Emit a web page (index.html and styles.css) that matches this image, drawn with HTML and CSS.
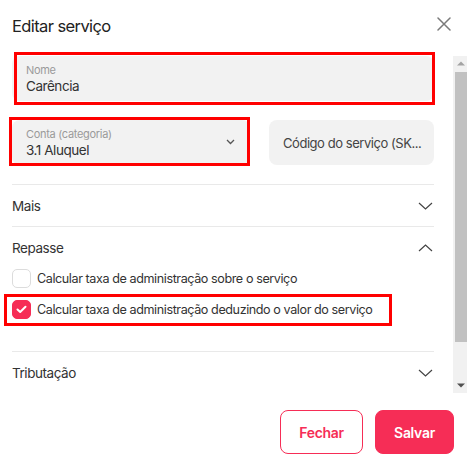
FILE: index.html
```html
<!DOCTYPE html>
<html lang="pt-BR">
<head>
<meta charset="utf-8">
<title>Editar serviço</title>
<link rel="stylesheet" href="styles.css">
</head>
<body>
<div class="modal">
  <header class="modal-header">
    <h2 class="title">Editar serviço</h2>
    <button class="close" aria-label="Fechar">
      <svg width="14" height="14" viewBox="0 0 14 14"><path d="M1 1L13 13M13 1L1 13" stroke="#7a7a7a" stroke-width="1.5" fill="none" stroke-linecap="round"/></svg>
    </button>
  </header>
  <div class="body-wrap">
    <div class="modal-body">
      <div class="field">
        <span class="label">Nome</span>
        <span class="value">Carência</span>
      </div>
      <div class="row2">
        <div class="field select">
          <div class="field-text">
            <span class="label">Conta (categoria)</span>
            <span class="value">3.1 Aluquel</span>
          </div>
          <svg class="select-chev" width="9" height="6" viewBox="0 0 9 6"><path d="M1 1L4.5 4.5L8 1" stroke="#555" stroke-width="1.3" fill="none"/></svg>
        </div>
        <div class="field placeholder">Código do serviço (SK...</div>
      </div>
      <section class="acc">
        <div class="acc-head">
          <span>Mais</span>
          <svg width="15" height="8" viewBox="0 0 15 8"><path d="M1 1L7.5 7L14 1" stroke="#444" stroke-width="1.2" fill="none"/></svg>
        </div>
      </section>
      <section class="acc">
        <div class="acc-head">
          <span>Repasse</span>
          <svg width="15" height="8" viewBox="0 0 15 8"><path d="M1 7L7.5 1L14 7" stroke="#444" stroke-width="1.2" fill="none"/></svg>
        </div>
        <div class="checks">
          <label class="check">
            <span class="box"></span>
            <span>Calcular taxa de administração sobre o serviço</span>
          </label>
          <label class="check">
            <span class="box on">
              <svg width="11" height="9" viewBox="0 0 11 9"><path d="M1.5 4.5L4.2 7L9.5 1.8" stroke="#fff" stroke-width="2" fill="none" stroke-linecap="round" stroke-linejoin="round"/></svg>
            </span>
            <span>Calcular taxa de administração deduzindo o valor do serviço</span>
          </label>
        </div>
      </section>
      <section class="acc">
        <div class="acc-head">
          <span>Tributação</span>
          <svg width="15" height="8" viewBox="0 0 15 8"><path d="M1 1L7.5 7L14 1" stroke="#444" stroke-width="1.2" fill="none"/></svg>
        </div>
      </section>
    </div>
    <div class="scrollbar" aria-hidden="true">
      <div class="sb-btn">
        <svg width="8" height="5" viewBox="0 0 8 5"><path d="M0 4.5L4 0.5L8 4.5Z" fill="#a3a3a3"/></svg>
      </div>
      <div class="sb-track"><div class="sb-thumb"></div></div>
      <div class="sb-btn">
        <svg width="8" height="5" viewBox="0 0 8 5"><path d="M0 0.5L4 4.5L8 0.5Z" fill="#505050"/></svg>
      </div>
    </div>
  </div>
  <footer class="modal-footer">
    <button class="btn btn-outline">Fechar</button>
    <button class="btn btn-primary">Salvar</button>
  </footer>
</div>
<div class="mark mark-nome"></div>
<div class="mark mark-conta"></div>
<div class="mark mark-check"></div>
</body>
</html>
```

FILE: styles.css
```css
* { box-sizing: border-box; }
html, body { margin: 0; padding: 0; }
body {
  font-family: "Inter", "Noto Sans", sans-serif;
  color: #333;
  background: #fff;
  position: relative;
  width: 467px;
  height: 460px;
  overflow: hidden;
}
.modal {
  height: 460px;
  display: flex;
  flex-direction: column;
}
.modal-header {
  height: 56px;
  flex: none;
  display: flex;
  justify-content: space-between;
  align-items: flex-start;
  padding: 16px 16px 0 12px;
}
.title {
  margin: 0;
  font-size: 16.5px;
  line-height: 20px;
  font-weight: 400;
  color: #222;
  letter-spacing: -0.6px;
}
.close {
  border: 0;
  background: none;
  padding: 0;
  margin-top: 1px;
  width: 14px;
  height: 14px;
  display: block;
}
.close svg { display: block; }
.body-wrap {
  flex: 1;
  min-height: 0;
  display: flex;
}
.modal-body {
  flex: 1;
  min-width: 0;
  overflow: hidden;
  padding: 0 19px 44px 12px;
}
.scrollbar {
  width: 14px;
  flex: none;
  background: #f1f1f1;
  display: flex;
  flex-direction: column;
}
.sb-btn {
  height: 15px;
  flex: none;
  display: flex;
  align-items: center;
  justify-content: center;
  padding-left: 1px;
}
.sb-btn svg { display: block; }
.sb-track { flex: 1; padding-top: 1px; }
.sb-thumb {
  height: 270px;
  margin-left: 2px;
  background: #c1c1c1;
}
.field {
  background: #f2f2f2;
  border-radius: 8px;
  height: 45px;
  padding: 7px 14px 0;
  display: flex;
  flex-direction: column;
}
.label {
  font-size: 11px;
  line-height: 14px;
  color: #9a9a9a;
  letter-spacing: -0.3px;
}
.value {
  font-size: 13.5px;
  line-height: 18px;
  color: #333;
  letter-spacing: -0.45px;
}
.row2 {
  margin-top: 19px;
  display: grid;
  grid-template-columns: 238px 1fr;
  gap: 19px;
}
.select {
  flex-direction: row;
  justify-content: space-between;
  align-items: flex-start;
  padding-right: 15px;
}
.field-text { display: flex; flex-direction: column; }
.select-chev { margin-top: 12px; }
.placeholder {
  padding: 0 14px;
  justify-content: center;
  font-size: 13px;
  color: #444;
  white-space: nowrap;
  overflow: hidden;
  letter-spacing: -0.45px;
}
.acc { border-top: 1px solid #e9e9e9; }
.row2 + .acc { margin-top: 19px; }
.acc-head {
  height: 41px;
  display: flex;
  justify-content: space-between;
  align-items: center;
  font-size: 13.5px;
  color: #333;
  letter-spacing: -0.45px;
  padding-right: 1px;
}
.acc-head svg { display: block; }
.checks {
  display: flex;
  flex-direction: column;
  gap: 12px;
  padding: 1px 0 32px;
}
.check {
  display: flex;
  align-items: center;
  gap: 6px;
  font-size: 12.6px;
  color: #333;
  height: 19px;
  letter-spacing: -0.42px;
}
.box {
  width: 19px;
  height: 19px;
  border: 1px solid #dcdcdc;
  border-radius: 5px;
  background: #fff;
  flex: none;
  display: flex;
  align-items: center;
  justify-content: center;
}
.box.on { background: #f62d56; border-color: #f62d56; }
.box svg { display: block; }
.modal-footer {
  height: 67px;
  flex: none;
  display: flex;
  justify-content: flex-end;
  align-items: flex-start;
  gap: 12px;
  padding: 17px 13px 0 0;
}
.btn {
  height: 44px;
  border-radius: 8px;
  font-family: inherit;
  font-size: 14px;
  font-weight: 600;
  letter-spacing: -0.3px;
  cursor: pointer;
}
.btn-outline {
  width: 83px;
  background: #fff;
  border: 1px solid #f62d56;
  color: #f62d56;
}
.btn-primary {
  width: 79px;
  background: #f62d56;
  border: 1px solid #f62d56;
  color: #fff;
}
.mark {
  position: absolute;
  border: 3px solid #ff0000;
  pointer-events: none;
}
.mark-nome { left: 14px; top: 52px; width: 421px; height: 53px; }
.mark-conta { left: 9px; top: 117px; width: 241px; height: 49px; }
.mark-check { left: 4px; top: 294px; width: 388px; height: 32px; }
```
